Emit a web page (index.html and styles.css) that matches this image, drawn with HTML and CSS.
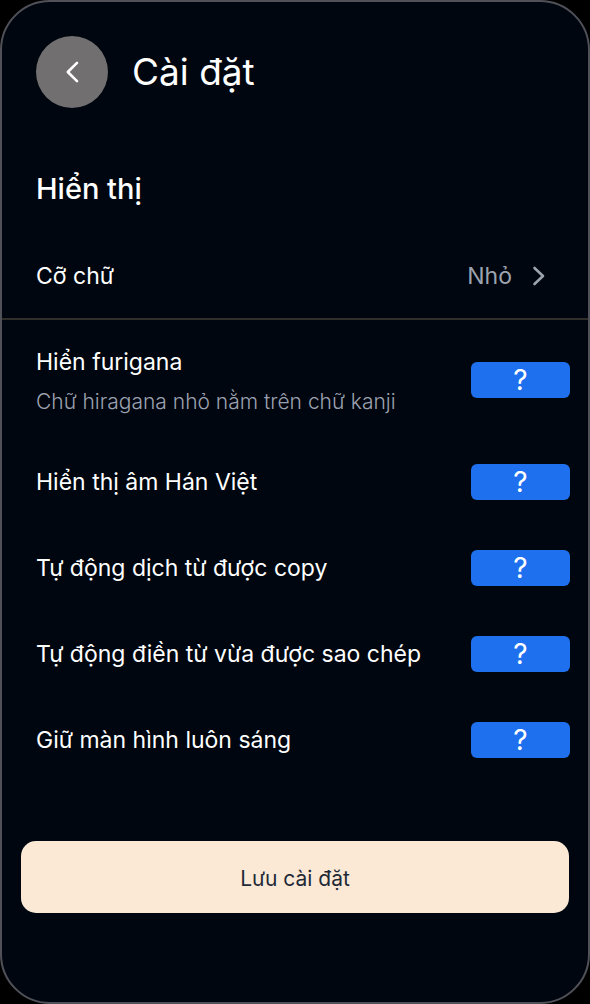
FILE: index.html
```html
<!DOCTYPE html>
<html lang="vi">
<head>
<meta charset="utf-8">
<meta name="viewport" content="width=device-width, initial-scale=1">
<title>Cài đặt</title>
<link rel="stylesheet" href="styles.css">
</head>
<body>
<main class="screen">
  <header class="header">
    <button class="back" type="button" aria-label="Quay lại">
      <svg width="14" height="24" viewBox="0 0 14 24" fill="none" stroke="currentColor" stroke-width="2.6" stroke-linecap="round" stroke-linejoin="round"><path d="M12 2.8 2.8 12l9.2 9.2"/></svg>
    </button>
    <h1 class="title">Cài đặt</h1>
  </header>
  <h2 class="section-title">Hiển thị</h2>
  <button class="size-row" type="button">
    <span>Cỡ chữ</span>
    <span class="size-value">Nhỏ
      <svg width="14" height="20" viewBox="0 0 14 20" fill="none" stroke="currentColor" stroke-width="2.6" stroke-linecap="round" stroke-linejoin="round"><path d="M2.5 2 11 10 2.5 18"/></svg>
    </span>
  </button>
  <ul class="options">
    <li class="option option-detailed">
      <div class="option-text">
        <span id="furigana">Hiển furigana</span>
        <span class="hint">Chữ hiragana nhỏ nằm trên chữ kanji</span>
      </div>
      <button class="toggle" type="button" aria-describedby="furigana">?</button>
    </li>
    <li class="option">
      <span id="hanviet">Hiển thị âm Hán Việt</span>
      <button class="toggle" type="button" aria-describedby="hanviet">?</button>
    </li>
    <li class="option">
      <span id="translate">Tự động dịch từ được copy</span>
      <button class="toggle" type="button" aria-describedby="translate">?</button>
    </li>
    <li class="option">
      <span id="fill">Tự động điền từ vừa được sao chép</span>
      <button class="toggle" type="button" aria-describedby="fill">?</button>
    </li>
    <li class="option">
      <span id="awake">Giữ màn hình luôn sáng</span>
      <button class="toggle" type="button" aria-describedby="awake">?</button>
    </li>
  </ul>
  <button class="save" type="button">Lưu cài đặt</button>
</main>
</body>
</html>
```
FILE: styles.css
```css
* {
  box-sizing: border-box;
}

body {
  margin: 0;
  background: #000;
  color: #fff;
  font-family: Inter, "Noto Sans", sans-serif;
  font-size: 23px;
  font-weight: 400;
  line-height: 36px;
}

button {
  border: 0;
  margin: 0;
  padding: 0;
  background: none;
  color: inherit;
  font: inherit;
  cursor: pointer;
}

.screen {
  display: flex;
  flex-direction: column;
  min-height: 100vh;
  border: 2px solid #505158;
  border-radius: 50px;
  background: #00060f;
}

.header {
  display: flex;
  align-items: center;
  gap: 24px;
  padding: 34px 34px 0;
}

.back {
  display: grid;
  place-items: center;
  width: 72px;
  height: 72px;
  border-radius: 50%;
  background: #716f70;
}

.title {
  margin: 0;
  font-size: 37px;
  font-weight: 400;
}

.section-title {
  margin: 62px 34px 0;
  font-size: 29px;
  font-weight: 500;
  line-height: 38px;
}

.size-row {
  display: flex;
  align-items: center;
  justify-content: space-between;
  margin-top: 50px;
  padding: 0 42px 24px 34px;
  border-bottom: 2px solid #302e2b;
  text-align: left;
}

.size-value {
  display: flex;
  align-items: center;
  gap: 20px;
  color: #9ca3af;
}

.options {
  display: flex;
  flex-direction: column;
  gap: 50px;
  margin: 24px 0 0;
  padding: 0 18px 0 34px;
  list-style: none;
}

.option {
  display: flex;
  align-items: center;
  justify-content: space-between;
  gap: 16px;
}

.option-detailed {
  margin-bottom: -2px;
}

.option-text {
  display: flex;
  flex-direction: column;
  gap: 8px;
}

.hint {
  color: #9ca1b0;
  font-size: 21px;
  font-weight: 300;
  line-height: 28px;
}

.toggle {
  flex: none;
  width: 99px;
  height: 36px;
  border-radius: 6px;
  background: #1f70ee;
  font-size: 28px;
}

.save {
  height: 72px;
  margin: 83px 19px 89px;
  padding-top: 3px;
  border-radius: 15px;
  background: #fbe9d6;
  color: #1f2937;
  font-size: 21px;
}
```
